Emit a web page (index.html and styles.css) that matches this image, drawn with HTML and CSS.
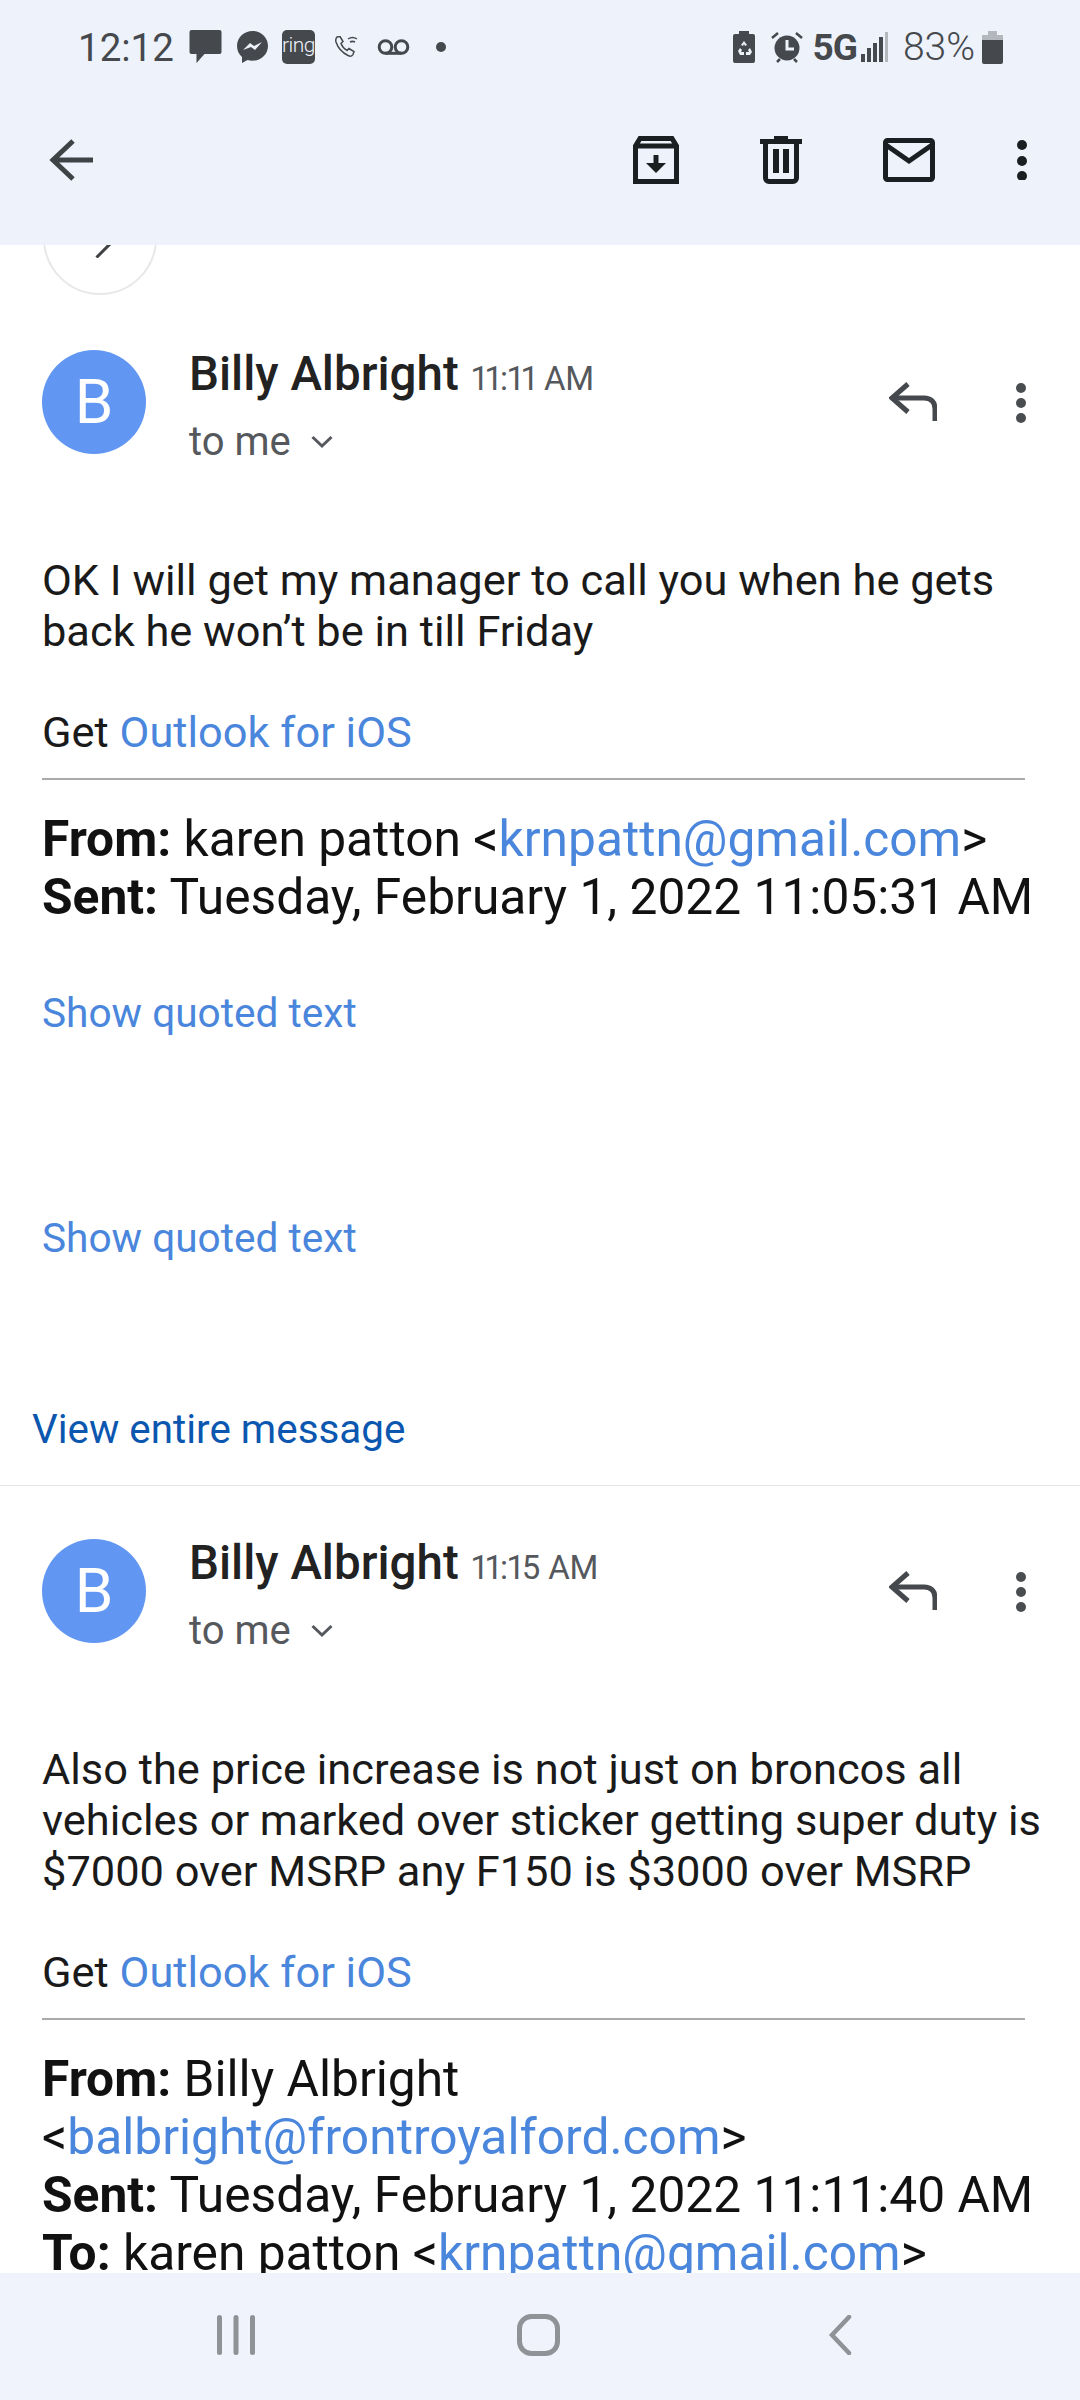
FILE: index.html
```html
<!DOCTYPE html>
<html lang="en">
<head>
  <meta charset="UTF-8">
  <meta name="viewport" content="width=device-width, initial-scale=1.0">
  <title>Gmail conversation</title>
  <link rel="stylesheet" href="styles.css">
</head>
<body>
  <div class="mail-page">
    <div class="mail-top">
      <div class="status-bar">
        <div class="status-group">
          <span class="status-time">12:12</span>
          <svg class="status-sms" width="33" height="34" viewBox="0 0 32 34"><path d="M2 0h28a2 2 0 0 1 2 2v20a2 2 0 0 1-2 2H15L7 33v-9H2a2 2 0 0 1-2-2V2a2 2 0 0 1 2-2z" fill="#45484c"/></svg>
          <svg class="status-messenger" width="31" height="32" viewBox="0 0 31 32"><path d="M15.500 0C7 0 0 6.500 0 15c0 4.500 1.900 8.300 5 11v6l5.500-3c1.600.5 3.200.7 5 .7 8.500 0 15.500-6.300 15.500-14.700S24 0 15.500 0z" fill="#45484c"/><path d="M6 19l7-7 4 3 8-4-7 8-4-3z" fill="#edf2fb"/></svg>
          <span class="status-ring">ring</span>
          <svg class="status-wifi-call" width="23" height="22" viewBox="0 0 23 22" fill="none" stroke="#45484c" stroke-width="1.500"><path d="M2 1l3-.5 3 5-2 2c1 3 3 5 6 7l2-2 5 3-1 3c-1 2-3 2-5 1C8 17 3 12 1 6c-.5-2 0-4 1-5z"/><path d="M13 3c3-2 6-2 9 0M15 6c2-1 3-1 5 0"/></svg>
          <svg class="status-voicemail" width="33" height="16" viewBox="0 0 32 16" fill="none" stroke="#45484c" stroke-width="3"><circle cx="8" cy="8" r="6.300"/><circle cx="24" cy="8" r="6.300"/><path d="M8 14.300h16"/></svg>
          <span class="status-dot"></span>
        </div>
        <div class="status-group">
          <svg class="status-saver" width="22" height="32" viewBox="0 0 22 32"><path d="M6 0h10v3h4a2 2 0 0 1 2 2v25a2 2 0 0 1-2 2H2a2 2 0 0 1-2-2V5a2 2 0 0 1 2-2h4z" fill="#45484c"/><path d="M11 10l3 4-2 1-1-2-1 2-2-1zM5 20l2-3 2 2-1 2h3v3H7zM17 17l2 4-2 3h-4v-3h3l-1-2z" fill="#edf2fb"/></svg>
          <svg class="status-alarm" width="32" height="32" viewBox="0 0 32 32"><circle cx="16" cy="17" r="12.500" fill="#45484c"/><path d="M16 9v9h7" fill="none" stroke="#edf2fb" stroke-width="3"/><path d="M1 7l6-5M31 7l-6-5M6 31l3-3M26 31l-3-3" stroke="#45484c" stroke-width="2.500"/></svg>
          <span class="status-5g">5G</span>
          <svg class="status-signal" width="27" height="30" viewBox="0 0 27 30"><path d="M0 22h4v8H0zM6 16h4v14H6zM12 11h4v19h-4zM18 5h4v25h-4z" fill="#45484c"/><path d="M24 0h3v30h-3z" fill="#b4b7bb"/></svg>
          <span class="status-percent">83%</span>
          <svg class="status-battery" width="21" height="33" viewBox="0 0 21 33"><path d="M6 0h9v4h6v6H0V4h6z" fill="#b4b7bb"/><path d="M0 9h21v22a2 2 0 0 1-2 2H2a2 2 0 0 1-2-2z" fill="#45484c"/></svg>
        </div>
      </div>
      <div class="tool-bar">
        <svg class="tool-back" width="44" height="44" viewBox="0 0 44 44" fill="none" stroke="#3f4346" stroke-width="5"><path d="M44 22H5M24 3L4 22l20 19"/></svg>
        <div class="tool-actions">
          <svg width="46" height="48" viewBox="0 0 46 48" fill="none" stroke="#1c1f22" stroke-width="5"><path d="M2.500 45.500V10L7 2.500h32L43.500 10v35.500zM2.500 10h41"/><path d="M23 19v15" stroke-width="5"/><path d="M13 27l10 10 10-10z" fill="#1c1f22" stroke="none"/></svg>
          <svg width="42" height="48" viewBox="0 0 42 48" fill="none" stroke="#1c1f22" stroke-width="5"><path d="M0 5.500h42M14 2h14M5.500 6v36a3.500 3.500 0 0 0 3.500 3.500h24a3.500 3.500 0 0 0 3.500-3.500V6"/><path d="M16 13v24M26 13v24" stroke-width="6"/></svg>
          <svg width="52" height="44" viewBox="0 0 52 44" fill="none" stroke="#1c1f22" stroke-width="5"><rect x="2.500" y="2.500" width="47" height="39" rx="2"/><path d="M3 7l23 16L49 7"/></svg>
          <svg width="12" height="40" viewBox="0 0 12 40" fill="#1c1f22"><circle cx="6" cy="5" r="5"/><circle cx="6" cy="21" r="5"/><circle cx="6" cy="36" r="5"/></svg>
        </div>
      </div>
    </div>

    <div class="mail-scroll">
      <div class="expander">
        <svg width="40" height="40" viewBox="0 0 40 40" fill="none" stroke="#3f4346" stroke-width="3"><path d="M16 14l13 13-12.500 12.500"/></svg>
      </div>

      <div class="message message-first">
        <div class="message-header">
          <div class="avatar">B</div>
          <div class="sender">
            <div class="sender-line"><span class="sender-name">Billy Albright</span> <span class="sender-time">11:11 AM</span></div>
            <div class="sender-to">to me
              <svg width="22" height="14" viewBox="0 0 22 14" fill="none" stroke="#55585c" stroke-width="3"><path d="M1.500 2L11 11l9.500-9"/></svg>
            </div>
          </div>
          <svg class="reply-icon" width="48" height="40" viewBox="0 0 48 40" fill="none" stroke="#45484c" stroke-width="5"><path d="M19 2L3 16l16 14"/><path d="M3 16h32c7 0 11 4 11 11v12"/></svg>
          <svg class="more-icon" width="12" height="42" viewBox="0 0 12 42" fill="#4a4d50"><circle cx="6" cy="6" r="5"/><circle cx="6" cy="21" r="5"/><circle cx="6" cy="36" r="5"/></svg>
        </div>
        <p class="body-text">OK I will get my manager to call you when he gets<br>back he won’t be in till Friday</p>
        <p class="body-text body-get">Get <a class="link">Outlook for iOS</a></p>
        <hr class="rule">
        <div class="quoted-head">
          <b>From:</b> karen patton &lt;<a class="link">krnpattn@gmail.com</a>&gt;<br>
          <b>Sent:</b> Tuesday, February 1, 2022 11:05:31 AM
        </div>
        <a class="show-quoted show-one">Show quoted text</a>
        <a class="show-quoted show-two">Show quoted text</a>
        <a class="view-entire">View entire message</a>
      </div>

      <div class="message">
        <div class="message-header">
          <div class="avatar">B</div>
          <div class="sender">
            <div class="sender-line"><span class="sender-name">Billy Albright</span> <span class="sender-time">11:15 AM</span></div>
            <div class="sender-to">to me
              <svg width="22" height="14" viewBox="0 0 22 14" fill="none" stroke="#55585c" stroke-width="3"><path d="M1.500 2L11 11l9.500-9"/></svg>
            </div>
          </div>
          <svg class="reply-icon" width="48" height="40" viewBox="0 0 48 40" fill="none" stroke="#45484c" stroke-width="5"><path d="M19 2L3 16l16 14"/><path d="M3 16h32c7 0 11 4 11 11v12"/></svg>
          <svg class="more-icon" width="12" height="42" viewBox="0 0 12 42" fill="#4a4d50"><circle cx="6" cy="6" r="5"/><circle cx="6" cy="21" r="5"/><circle cx="6" cy="36" r="5"/></svg>
        </div>
        <p class="body-text">Also the price increase is not just on broncos all<br>vehicles or marked over sticker getting super duty is<br>$7000 over MSRP any F150 is $3000 over MSRP</p>
        <p class="body-text body-get">Get <a class="link">Outlook for iOS</a></p>
        <hr class="rule">
        <div class="quoted-head">
          <b>From:</b> Billy Albright<br>
          &lt;<a class="link">balbright@frontroyalford.com</a>&gt;<br>
          <b>Sent:</b> Tuesday, February 1, 2022 11:11:40 AM<br>
          <b>To:</b> karen patton &lt;<a class="link">krnpattn@gmail.com</a>&gt;
        </div>
      </div>
    </div>

    <div class="nav-bar">
      <svg width="38" height="40" viewBox="0 0 38 40" fill="#8f9296"><rect x="0" y="0" width="5" height="40" rx="2.500"/><rect x="16.500" y="0" width="5" height="40" rx="2.500"/><rect x="33" y="0" width="5" height="40" rx="2.500"/></svg>
      <svg class="nav-home" width="43" height="42" viewBox="0 0 43 42" fill="none" stroke="#8f9296" stroke-width="5"><rect x="2.500" y="2.500" width="38" height="37" rx="12"/></svg>
      <svg width="24" height="40" viewBox="0 0 24 40" fill="none" stroke="#8f9296" stroke-width="4.500" stroke-linecap="round"><path d="M21 2L4 20l17 18"/></svg>
    </div>
  </div>
</body>
</html>
```

FILE: styles.css
```css
html, body {
  margin: 0;
  padding: 0;
  background-color: #fff;
}

.mail-page {
  width: 1080px;
  height: 2400px;
  display: flex;
  flex-direction: column;
  overflow: hidden;
  font-family: Roboto, "Liberation Sans", sans-serif;
  color: #1a1a1a;
}

.mail-top {
  height: 245px;
  flex-shrink: 0;
  background-color: #edf2fb;
  position: relative;
  z-index: 2;
}

.status-bar {
  height: 94px;
  display: flex;
  justify-content: space-between;
  align-items: center;
  padding: 0 77px 0 78px;
  color: #45484c;
}

.status-group {
  display: flex;
  align-items: center;
}

.status-time {
  font-size: 38.500px;
  margin-right: 15px;
}

.status-messenger {
  margin-left: 15px;
}

.status-ring {
  width: 33px;
  height: 34px;
  margin-left: 14px;
  background-color: #45484c;
  border-radius: 5px;
  color: #edf2fb;
  font-size: 21px;
  font-weight: 300;
  letter-spacing: -0.500px;
  line-height: 31px;
  text-align: center;
}

.status-wifi-call {
  margin-left: 20px;
}

.status-voicemail {
  margin-left: 19px;
}

.status-dot {
  width: 10px;
  height: 10px;
  margin-left: 26px;
  border-radius: 50%;
  background-color: #45484c;
}

.status-alarm {
  margin-left: 16px;
}

.status-5g {
  margin-left: 9px;
  font-size: 37px;
  font-weight: 700;
  letter-spacing: -1px;
}

.status-signal {
  margin-left: 4px;
}

.status-percent {
  margin-left: 15px;
  font-size: 39px;
  font-weight: 300;
}

.status-battery {
  margin-left: 7px;
}

.tool-bar {
  height: 132px;
  display: flex;
  justify-content: space-between;
  align-items: center;
  padding: 0 52px 0 49px;
}

.tool-actions {
  display: flex;
  align-items: center;
  gap: 81px;
}

.mail-scroll {
  flex: 1;
  overflow: hidden;
  min-height: 0;
}

.expander {
  width: 110px;
  height: 110px;
  margin: -64px 0 0 43px;
  border: 2px solid #e8e8e8;
  border-radius: 50%;
  display: flex;
  align-items: center;
  justify-content: center;
}

.message {
  padding: 0 0 0 42px;
}

.message-first {
  padding-top: 55px;
  border-bottom: 1px solid #e6e6e6;
  padding-bottom: 30px;
}

.message + .message {
  padding-top: 53px;
}

.message-header {
  display: flex;
  align-items: flex-start;
  height: 104px;
  padding-right: 53px;
}

.avatar {
  width: 104px;
  height: 104px;
  flex-shrink: 0;
  border-radius: 50%;
  background-color: #6197f2;
  color: #fff;
  font-size: 62px;
  line-height: 104px;
  text-align: center;
}

.sender {
  margin-left: 43px;
  flex: 1;
  margin-top: -1px;
}

.sender-line {
  height: 50px;
  line-height: 50px;
  white-space: nowrap;
}

.sender-name {
  font-size: 47.500px;
  font-weight: 500;
  color: #222;
}

.sender-time {
  margin-left: 9px;
  font-size: 33px;
  font-variant-numeric: proportional-nums;
  letter-spacing: -0.200px;
  color: #55585c;
}

.sender-to {
  margin-top: 20px;
  font-size: 40px;
  line-height: 46px;
  color: #55585c;
}

.sender-to svg {
  margin-left: 10px;
  vertical-align: 6px;
}

.reply-icon {
  margin-top: 32px;
}

.more-icon {
  margin: 32px 0 0 78px;
}

.body-text {
  margin: 0;
  font-size: 43.400px;
  line-height: 51px;
  color: #1a1a1a;
  white-space: nowrap;
}

.message-header + .body-text {
  margin-top: 101px;
}

.body-get {
  margin-top: 50px;
}

.link {
  color: #4a86dc;
}

.rule {
  width: 983px;
  height: 2px;
  margin: 20px 0 0;
  border: 0;
  background-color: #aaa;
}

.quoted-head {
  margin-top: 30px;
  font-size: 49.700px;
  line-height: 58px;
  color: #111;
  white-space: nowrap;
}

.show-quoted {
  display: block;
  font-size: 40.600px;
  line-height: 50px;
  color: #4a86dc;
}

.show-one {
  margin-top: 62px;
}

.show-two {
  margin-top: 175px;
}

.view-entire {
  display: block;
  margin: 142px 0 0 -10px;
  font-size: 40.400px;
  line-height: 50px;
  color: #0b57b0;
}

.nav-bar {
  height: 127px;
  flex-shrink: 0;
  background-color: #f0f3fb;
  display: flex;
  align-items: center;
  justify-content: space-between;
  padding: 0 228px 3px 217px;
  box-sizing: border-box;
  position: relative;
}

.nav-home {
  margin-right: 6px;
}
```
